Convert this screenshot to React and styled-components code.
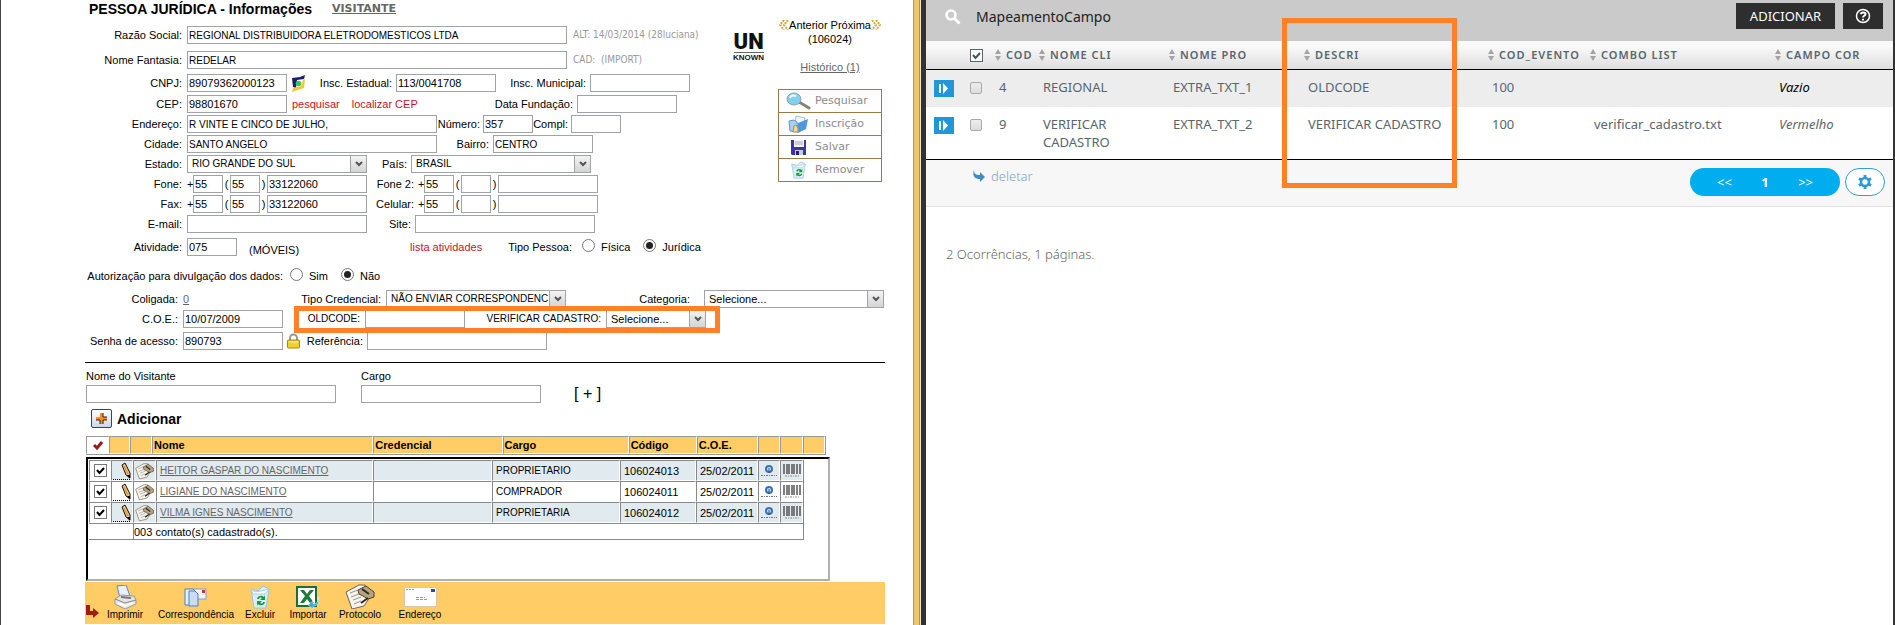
import React, { useId } from "react";
import styled, { createGlobalStyle } from "styled-components";

const GlobalStyle = createGlobalStyle`
  *, *::before, *::after { box-sizing: border-box; }
  body { margin: 0; background: #fff; }
  input, select, button { font: inherit; color: inherit; margin: 0; }
`;

const ui = `"Liberation Sans", Arial, sans-serif`;
const tahoma = `"DejaVu Sans Condensed", "DejaVu Sans", sans-serif`;
const verdana = `"DejaVu Sans", Verdana, sans-serif`;
const humanist = `"Noto Sans", "Open Sans", sans-serif`;

/* ---------- page ---------- */

const Page = styled.div`
  display: grid;
  grid-template-columns: minmax(921px, 921fr) minmax(0, 974fr);
  min-height: 100vh;
`;

const RecordPane = styled.section`
  display: flex;
  border-left: 1px solid #444;
  background: #fff;
  font: 11px/14px ${ui};
  color: #000;
`;

const RecordContent = styled.div`
  flex: 1;
  padding: 0 28px 0 84px;
`;

const PaneDivider = styled.div`
  width: 8px;
  flex: none;
  background: linear-gradient(
    90deg, #b2965c 0 1px, #efc670 1px 6px, #ad925c 6px 7px, #f1e6cb 7px 8px
  );
`;

const Overview = styled.div`
  display: flex;
  align-items: flex-start;
`;

const FormColumn = styled.div`
  flex: none;
  width: 648px;
`;

/* ---------- form parts ---------- */

const TitleBar = styled.header`
  display: flex;
  align-items: center;
  gap: 20px;
  height: 18px;
  padding-left: 4px;
`;

const Title = styled.h1`
  margin: 0;
  font: bold 14px/18px ${ui};
  white-space: nowrap;
`;

const VisitorLink = styled.a`
  font: bold 11px/18px ${verdana};
  color: #666;
`;

const Row = styled.div`
  display: flex;
  align-items: center;
  height: 18px;
  margin-top: ${(p) => p.$top ?? 2}px;
`;

const Label = styled.label`
  flex: none;
  width: ${(p) => p.$width}px;
  padding-right: ${(p) => p.$pad ?? 4}px;
  text-align: right;
  white-space: nowrap;
`;

const TextInput = styled.input`
  flex: none;
  width: ${(p) => p.$width}px;
  height: 18px;
  padding: 0 1px;
  border: 1px solid #a0a3a8;
  border-radius: 0;
  background: #fff;
  outline: none;
  && { font-size: ${(p) => (p.$compact ? 10 : 11)}px; }
`;

const SelectFrame = styled.span`
  display: grid;
  flex: none;
  width: ${(p) => p.$width}px;
  height: 18px;
`;

const SelectInput = styled.select`
  grid-area: 1 / 1;
  width: 100%;
  min-width: 0;
  padding: 0 17px 0 4px;
  appearance: none;
  border: 1px solid #a0a3a8;
  border-radius: 0;
  background: #fff;
  outline: none;
  && { font-size: ${(p) => (p.$compact ? 10 : 11)}px; }
`;

const SelectArrow = styled.span`
  grid-area: 1 / 1;
  justify-self: end;
  display: grid;
  place-items: center;
  width: 17px;
  border: 1px solid #a0a3a8;
  background: linear-gradient(#f3f3f3, #d4d4d4);
  pointer-events: none;
`;

const Mark = styled.span`
  flex: none;
  width: ${(p) => p.$width ?? 7}px;
  text-align: center;
`;

const SideNote = styled.span`
  padding-left: 6px;
  font: 10px/14px ${tahoma};
  color: #999;
  white-space: pre;
`;

const LinkSlot = styled.span`
  display: flex;
  flex: none;
  gap: 12px;
  width: ${(p) => p.$width}px;
  padding-left: ${(p) => p.$pad ?? 0}px;
  white-space: nowrap;
`;

const RedLink = styled.a`
  color: #c8141e;
  text-decoration: none;
`;

const GreyLink = styled.a`
  color: #666;
`;

const Activity = styled.span`
  flex: none;
  width: 173px;
  padding: 6px 0 0 12px;
`;

const IconSlot = styled.span`
  display: grid;
  place-items: center;
  flex: none;
  width: ${(p) => p.$width}px;
`;

const RadioLabel = styled.label`
  display: flex;
  align-items: center;
  gap: 6px;
  margin-right: 13px;
`;

const RadioInput = styled.input`
  && { margin-bottom: 4px; }
  display: grid;
  place-items: center;
  width: 13px;
  height: 13px;
  appearance: none;
  border: 1px solid #777;
  border-radius: 50%;
  background: #fff;

  &:checked::before {
    content: "";
    width: 7px;
    height: 7px;
    border-radius: 50%;
    background: #222;
  }
`;

const Highlighted = styled.div`
  position: relative;
  display: flex;
  align-items: center;
  margin-left: 11px;
  padding: 0 14px 0 13px;
  font-size: 10px;

  &::after {
    content: "";
    position: absolute;
    inset: -4px 0 -5px;
    border: 5px solid #ff8026;
    pointer-events: none;
  }
`;

const Rule = styled.hr`
  height: 1px;
  margin: 12px 0 6px;
  border: 0;
  background: #000;
`;

const VisitorRow = styled.div`
  display: flex;
  align-items: flex-end;
  gap: 25px;
  padding-left: 1px;
`;

const VisitorField = styled.label`
  display: grid;
  gap: 2px;
`;

const PlusButton = styled.button`
  && { margin-left: 8px; }
  padding: 0;
  border: 0;
  background: none;
  font: 16px/18px ${ui};
`;

const AddRow = styled.div`
  display: flex;
  align-items: center;
  gap: 5px;
  margin: 6px 0 8px;
  padding-left: 6px;
  font: bold 14px/16px ${ui};
`;

const AddButton = styled.button`
  display: grid;
  place-items: center;
  width: 21px;
  height: 19px;
  padding: 0;
  border: 1px solid #1d4a80;
  border-radius: 2px;
  background: linear-gradient(#fff, #cfd6e4);
`;

/* ---------- aside ---------- */

const Logo = styled.div`
  display: grid;
  flex: none;
  justify-items: center;
  width: 30px;
  margin-top: 32px;
  color: #111;
`;

const LogoTop = styled.span`
  width: 30px;
  border-bottom: 1px solid #666;
  font: 900 22px/20px Roboto, ${ui};
  text-align: center;
`;

const LogoBottom = styled.span`
  font: bold 8px/9px ${ui};
`;

const Aside = styled.aside`
  flex: none;
  width: 104px;
  margin: 18px 0 0 15px;
  text-align: center;
`;

const Neighbours = styled.nav`
  display: flex;
  align-items: center;
  justify-content: center;

  a { color: #000; text-decoration: none; }
  a + a { margin-left: 3px; }
`;

const History = styled.p`
  margin: 14px 0 15px;
`;

const Actions = styled.div`
  display: grid;
  border: 1px solid #9a7a45;
  border-top: 0;
`;

const ActionButton = styled.button`
  display: flex;
  align-items: center;
  gap: 4px;
  height: 23px;
  padding: 0 0 0 7px;
  border: 0;
  border-top: 1px solid #9a7a45;
  background: #fff;
  font: 11px/14px ${verdana};
  color: #8c8c8c;
`;

/* ---------- contacts ---------- */

const HeadTable = styled.table`
  width: 740px;
  margin-left: 1px;
  table-layout: fixed;
  border-spacing: 0;
  border-right: 1px solid #999;
  border-bottom: 1px solid #999;
`;

const HeadCell = styled.th`
  height: 18px;
  padding: 0 1px;
  border: 1px solid;
  border-color: #999 #fff #fff #999;
  background: ${(p) => (p.$plain ? "#fff" : "#fc6")};
  background-clip: padding-box;
  text-align: ${(p) => (p.$plain ? "center" : "left")};
  line-height: 14px;

  svg { display: block; margin: 0 auto; }
`;

const ListFrame = styled.div`
  width: 744px;
  min-height: 124px;
  margin: 2px 0 1px 1px;
  padding: 1px 0 0 1px;
  border: 2px solid;
  border-color: #000 #b0b0b0 #b0b0b0 #000;
`;

const ListTable = styled.table`
  width: 715px;
  table-layout: fixed;
  border-spacing: 0;
  border-right: 1px solid #888;
  border-bottom: 1px solid #888;
`;

const ListRow = styled.tr`
  background: ${(p) => (p.$shaded ? "#e1eaee" : "#fff")};
`;

const ListCell = styled.td`
  height: 21px;
  padding: 0 0 0 ${(p) => (p.$icon ? 0 : 3)}px;
  border: 1px solid;
  border-color: #888 #fff #fff #888;
  background: ${(p) => (p.$plain ? "#fff" : "transparent")};
  font-size: ${(p) => (p.$compact ? 10 : 11)}px;
  line-height: 14px;
  white-space: nowrap;

  svg { display: block; margin: 0 auto; }
`;

const FootCell = styled.td`
  height: 16px;
  padding: 0;
  border-top: 1px solid #888;
  border-left: ${(p) => (p.$blank ? 0 : "1px solid #888")};
  line-height: 14px;
`;

const Tick = styled.span`
  display: grid;
  width: 13px;
  height: 13px;
  margin: 0 auto;

  > * { grid-area: 1 / 1; }
  > svg { pointer-events: none; }
`;

const TickInput = styled.input`
  width: 13px;
  height: 13px;
  appearance: none;
  border: 1px solid ${(p) => p.$border ?? "#777"};
  background: #fff;
`;

const Toolbar = styled.div`
  display: flex;
  height: 42px;
  padding: 2px 0 0 1px;
  background: #fc6;
`;

const ToolArrow = styled.span`
  width: 16px;
  padding-top: 21px;
`;

const ToolButton = styled.button`
  display: grid;
  grid-template-rows: 25px 12px;
  justify-items: center;
  justify-content: center;
  align-items: center;
  width: ${(p) => p.$width}px;
  padding: 0;
  border: 0;
  background: none;
  font: 10px/12px ${ui};
`;

/* ---------- mapping pane ---------- */

const MapPane = styled.section`
  min-height: 100vh;
  border: solid #333;
  border-width: 0 2px 0 5px;
  background: #fff;
  font: 13px/18px ${humanist};
  color: #58666c;
`;

const TopBar = styled.header`
  display: flex;
  align-items: flex-start;
  height: 41px;
  padding: 3px 10px 0 19px;
  background: #cacaca;
`;

const PaneTitle = styled.h2`
  flex: 1;
  margin: 0;
  padding-left: 15px;
  font: 14px/28px ${humanist};
  color: #222;
`;

const DarkButton = styled.button`
  && { margin-left: 8px; }
  display: grid;
  place-items: center;
  width: ${(p) => p.$width}px;
  height: 26px;
  padding: 0;
  border: 0;
  background: #2e2e2e;
  font: 13px/20px ${humanist};
  color: #fff;
`;

const MapTable = styled.table`
  width: 100%;
  table-layout: fixed;
  border-spacing: 0;
  border-bottom: 1px solid #000;
`;

const MapHead = styled.th`
  position: relative;
  height: 29px;
  padding: 0;
  border-bottom: 1px solid #000;
  background: linear-gradient(#f9f9f9 20%, #dedede);
  text-align: left;
`;

const SortButton = styled.button`
  display: flex;
  align-items: center;
  gap: 5px;
  padding: 0 0 0 2px;
  border: 0;
  background: none;
  font: 600 11px/16px ${humanist};
  letter-spacing: 1px;
  white-space: nowrap;
`;

const ColumnFrame = styled.span`
  position: absolute;
  z-index: 1;
  top: -23px;
  left: -20px;
  width: 175px;
  height: 170px;
  border: 5px solid #ff8026;
  pointer-events: none;
`;

const MapRow = styled.tr`
  height: ${(p) => p.$height}px;
  background: ${(p) => (p.$shaded ? "#ededed" : "#fff")};
`;

const MapCell = styled.td`
  padding: ${(p) => (p.$icon ? "10px 0 0 8px" : "8px 24px 8px 6px")};
  vertical-align: top;
  font-style: ${(p) => (p.$italic ? "italic" : "normal")};
  color: ${(p) => (p.$dark ? "#000" : "inherit")};
`;

const WideCell = styled(MapCell)`
  padding-right: 0;
  white-space: nowrap;
`;

const OpenButton = styled.button`
  display: grid;
  place-items: center;
  width: 20px;
  height: 17px;
  padding: 0;
  border: 0;
  background: #2196d8;
`;

const SoftCheck = styled.input`
  && { margin: 2px; }
  display: block;
  width: 12px;
  height: 12px;
  appearance: none;
  border: 1px solid #aaa;
  border-radius: 2px;
  background: linear-gradient(#eee, #dcdcdc);
`;

const MapFooter = styled.footer`
  display: flex;
  align-items: flex-start;
  gap: 5px;
  height: 47px;
  padding: 8px 8px 0 47px;
  border-bottom: 1px solid #e4e4e4;
  background: #f7f7f7;
`;

const FooterTools = styled.div`
  flex: 1;
`;

const DeleteLink = styled.a`
  display: inline-flex;
  align-items: center;
  gap: 6px;
  color: #7aa5cd;
  font-weight: 300;
  line-height: 16px;
  text-decoration: none;
`;

const Pager = styled.nav`
  display: flex;
  align-items: center;
  justify-content: space-between;
  width: 150px;
  height: 28px;
  padding: 0 27px;
  border-radius: 14px;
  background: #00adee;
  color: #fff;

  a { color: #fff; font-size: 13px; text-decoration: none; }
`;

const GearButton = styled.button`
  display: grid;
  place-items: center;
  width: 40px;
  height: 28px;
  padding: 0;
  border: 1px solid #2fa3cf;
  border-radius: 14px;
  background: #fff;
`;

const Summary = styled.p`
  margin: 38px 0 0 20px;
  font: 300 13px/18px ${humanist};
  color: #666;
`;

/* ---------- icons ---------- */

const Chevrons = ({ flip }) => (
  <svg width="10" height="10" viewBox="0 0 10 10" fill="none" stroke="#dba32a" strokeWidth="2" strokeDasharray="2 1" aria-hidden="true">
    <path d={flip ? "M1 0l4 5-4 5M5 0l4 5-4 5" : "M5 0L1 5l4 5M9 0L5 5l4 5"} />
  </svg>
);

const ReceitaIcon = () => (
  <svg width="15" height="17" viewBox="0 0 15 17" aria-hidden="true">
    <path d="M1 3l8-1 5-2-1 4-7 1-1 8-3-1z" fill="#1a1f6e" />
    <path d="M1 17l1-4 8-2 2-6 2-1-1 9-6 2z" fill="#f3c73c" />
    <circle cx="7.500" cy="8.500" r="2.800" fill="#3fc45a" />
  </svg>
);

const LockIcon = () => (
  <svg width="13" height="16" viewBox="0 0 13 16" aria-hidden="true">
    <path d="M3 8V5a3.500 3.500 0 0 1 7 0v3" fill="none" stroke="#999" strokeWidth="2" />
    <rect x="0.500" y="7" width="12" height="8" rx="1" fill="#f2cf2c" stroke="#a88412" />
    <path d="M2 9h9" stroke="#fff3a0" />
  </svg>
);

const MagnifierIcon = () => (
  <svg width="25" height="19" viewBox="0 0 25 19" aria-hidden="true">
    <path d="M13 10l10 6" stroke="#8d8374" strokeWidth="3" strokeLinecap="round" />
    <ellipse cx="8" cy="7" rx="7" ry="6" fill="#7fd2ee" stroke="#8f9fae" />
    <path d="M4 6c1-3 4-3 6-2" fill="none" stroke="#fff" strokeWidth="2" />
  </svg>
);

const FolderIcon = () => (
  <svg width="25" height="19" viewBox="0 0 25 19" aria-hidden="true">
    <path d="M10 1l9 2-2 10-8-2z" fill="#eef6ff" stroke="#9fc0e2" />
    <path d="M12 8l10-4-2 10-8 4z" fill="#4f97dc" />
    <path d="M3 6l5-1 3 2 1 10-8-1z" fill="#a8d0f3" stroke="#5d97cf" />
    <path d="M7 17l1-6 2-1 2 3v4z" fill="#e9d9a4" stroke="#a99255" />
  </svg>
);

const FloppyIcon = () => (
  <svg width="25" height="17" viewBox="0 0 25 17" aria-hidden="true">
    <path d="M5 1h15v15H6l-1-1z" fill="#3d369c" />
    <rect x="8" y="1" width="10" height="7" fill="#f2f2fa" />
    <path d="M9 3h8M9 5h8" stroke="#aaa" />
    <rect x="9" y="11" width="8" height="5" fill="#c9cbe0" />
    <rect x="10" y="12" width="3" height="4" fill="#26226b" />
  </svg>
);

const BinIcon = ({ width = 25, height = 18 }) => (
  <svg width={width} height={height} viewBox="0 0 24 24" aria-hidden="true">
    <path d="M3 4l7 2 5-5 6 3-3 19H6z" fill="#d9eff8" stroke="#9dc6dd" />
    <path d="M3 4l4 3 6-1 8-2-4 5H5z" fill="#fff" stroke="#a7cfe2" />
    <path d="M9 14c1-4 5-4 7-2l1-2v5h-5l2-2c-2-1-3 0-3 1zM17 17c-1 4-5 4-7 2l-1 2v-5h5l-2 2c2 1 3 0 3-1z" fill="#159a3a" />
  </svg>
);

const PlusIcon = () => (
  <svg width="13" height="13" viewBox="0 0 13 13" aria-hidden="true">
    <path d="M5 1h3v4h4v3H8v4H5V8H1V5h4z" fill="#ff8c1a" />
    <path d="M8 1v4h4M5 12V8H1M8 12V8h4" fill="none" stroke="#222" />
  </svg>
);

const RedCheckIcon = () => (
  <svg width="10" height="9" viewBox="0 0 10 9" aria-hidden="true">
    <path d="M1 4l3 3 5-6" fill="none" stroke="#a01818" strokeWidth="3" />
  </svg>
);

const CheckMark = ({ color = "#000" }) => (
  <svg width="13" height="13" viewBox="0 0 13 13" aria-hidden="true">
    <path d="M3 6l2.500 3L10 4" fill="none" stroke={color} strokeWidth="2" />
  </svg>
);

const PencilIcon = () => (
  <svg width="20" height="18" viewBox="0 0 20 18" aria-hidden="true">
    <path d="M1 17.500h17" stroke="#000" strokeDasharray="1 1" />
    <path d="M10 3l3-2 5 10v5l-4-3z" fill="#f2c27e" stroke="#111" />
    <path d="M12 4l4 8" stroke="#c98a40" />
    <path d="M15 13l3 0v4z" fill="#000" />
  </svg>
);

const NoteIcon = ({ width = 19, height = 18 }) => (
  <svg width={width} height={height} viewBox="0 0 30 25" aria-hidden="true">
    <path d="M1 8L14 1l6 0 5 12-6 9-12 3z" fill="#f6f4ee" stroke="#6b6558" />
    <path d="M5 9l8-3M6 13l8-3M8 16l8-3M9 20l7-3" stroke="#9b978c" />
    <path d="M13 6l8-4 8 6v5l-6 2-5-3-4-2z" fill="#b5a382" stroke="#4a4132" />
    <path d="M17 5l7 5M23 14l-7 5" stroke="#2e281e" strokeWidth="2" />
  </svg>
);

const BadgeIcon = () => (
  <svg width="18" height="14" viewBox="0 0 18 14" aria-hidden="true">
    <circle cx="9" cy="5" r="3" fill="#d5e3f5" stroke="#3c70b4" strokeWidth="2" />
    <path d="M9 4v5" stroke="#2a4f8c" />
    <path d="M1 11.500h16" stroke="#68748a" strokeDasharray="2 1 1 1" />
  </svg>
);

const BarcodeIcon = () => (
  <svg width="18" height="14" viewBox="0 0 18 14" aria-hidden="true">
    <path d="M1 0v10M4 0v10M6 0v10M9 0v10M11 0v10M14 0v10M17 0v10" stroke="#555" strokeWidth="1.500" />
    <path d="M2 12h15" stroke="#888" strokeDasharray="2 1 1 1" />
  </svg>
);

const CornerArrow = () => (
  <svg width="13" height="13" viewBox="0 0 13 13" aria-hidden="true">
    <path d="M0 0h4v6h3V3l6 5-6 5v-3H0z" fill="#a51a12" />
  </svg>
);

const PrinterIcon = () => (
  <svg width="24" height="24" viewBox="0 0 24 24" aria-hidden="true">
    <path d="M4 1l9-1 4 11-10 2z" fill="#e6f0ff" stroke="#5b87cc" />
    <path d="M2 14l6-4 13 1 2 4v4l-11 5-10-5z" fill="#e4e4e4" stroke="#999" />
    <path d="M2 14l10 4 11-3" fill="none" stroke="#888" />
    <path d="M5 18l7 3 8-3" fill="none" stroke="#fff" strokeWidth="2" />
    <path d="M8 12l10 1" stroke="#777" strokeWidth="2" />
  </svg>
);

const LetterIcon = () => (
  <svg width="23" height="20" viewBox="0 0 23 20" aria-hidden="true">
    <rect x="9" y="2" width="13" height="10" fill="#f3f7ff" stroke="#7d9fda" />
    <rect x="18" y="3" width="3" height="3" fill="#c33" />
    <path d="M1 2h8l3 3v13H1z" fill="#e2edff" stroke="#4d7fd0" />
    <path d="M5 4h6l3 3v12H5z" fill="#c9ddfb" stroke="#4d7fd0" />
  </svg>
);

const SheetIcon = () => (
  <svg width="24" height="24" viewBox="0 0 24 24" aria-hidden="true">
    <rect x="1" y="2" width="19" height="19" fill="#fff" stroke="#1b6e36" strokeWidth="2" />
    <path d="M4 5l4 0 3 4 3-4h4l-5 6 5 7h-4l-3-4-3 4H4l5-7z" fill="#1d7a3c" />
    <path d="M22 12c1 4-1 7-5 7v-3l-5 4 5 4v-3c5 0 7-4 5-9z" fill="#3f9fe0" stroke="#fff" strokeWidth="0.500" />
  </svg>
);

const EnvelopeIcon = () => (
  <svg width="33" height="20" viewBox="0 0 33 20" aria-hidden="true">
    <rect x="0.500" y="0.500" width="32" height="19" fill="#fff" stroke="#d5c8a8" />
    <path d="M2 2.500h9" stroke="#999" strokeDasharray="2 1" />
    <rect x="27" y="2" width="4" height="3" fill="#3346a8" />
    <path d="M12 10.500h9M12 12.500h12" stroke="#999" strokeDasharray="3 1" />
  </svg>
);

const SearchIcon = () => (
  <svg width="16" height="28" viewBox="0 0 16 28" aria-hidden="true">
    <circle cx="6" cy="12" r="4.500" fill="none" stroke="#fff" strokeWidth="2.600" />
    <path d="M9.500 15.500l5 5" stroke="#fff" strokeWidth="3" />
  </svg>
);

const HelpIcon = () => (
  <svg width="16" height="16" viewBox="0 0 16 16" fill="none" stroke="#fff" aria-hidden="true">
    <circle cx="8" cy="8" r="6.500" strokeWidth="1.500" />
    <path d="M5.500 6c1-2 5-2 5 0S8 7.500 8 9.500M8 10.800v1.700" strokeWidth="2" />
  </svg>
);

const SortIcon = () => (
  <svg width="6" height="12" viewBox="0 0 6 12" aria-hidden="true">
    <path d="M3 0l3 5H0zM3 12l3-5H0z" fill="#a3a3a3" />
  </svg>
);

const OpenIcon = () => (
  <svg width="10" height="11" viewBox="0 0 10 11" fill="#fff" aria-hidden="true">
    <path d="M0 1h2v9H0zM4 0l5 5.500L4 11z" />
  </svg>
);

const ReplyArrow = () => (
  <svg width="12" height="12" viewBox="0 0 12 12" aria-hidden="true">
    <path d="M1 0c0 3 1 5 6 5V2l5 5-5 5V9C2 9-1 6 1 0z" fill="#3f8cc4" />
  </svg>
);

const GearIcon = () => (
  <svg width="14" height="14" viewBox="0 0 14 14" aria-hidden="true">
    <circle cx="7" cy="7" r="4" fill="none" stroke="#2b9ad6" strokeWidth="2.600" />
    <path d="M7 0v2.500M7 11.500V14M1 3.500l2 1.200M11 9.300l2 1.200M13 3.500l-2 1.200M3 9.300l-2 1.200" stroke="#2b9ad6" strokeWidth="2.800" />
  </svg>
);

/* ---------- composed parts ---------- */

function Field({ label, labelWidth, pad, width, value = "", compact }) {
  const id = useId();
  return (
    <>
      <Label htmlFor={id} $width={labelWidth} $pad={pad}>{label}</Label>
      <TextInput id={id} $width={width} $compact={compact} defaultValue={value} />
    </>
  );
}

function SelectField({ label, labelWidth, pad, width, value, compact }) {
  const id = useId();
  return (
    <>
      <Label htmlFor={id} $width={labelWidth} $pad={pad}>{label}</Label>
      <SelectFrame $width={width}>
        <SelectInput id={id} $compact={compact}><option>{value}</option></SelectInput>
        <SelectArrow>
          <svg width="8" height="6" viewBox="0 0 8 6" aria-hidden="true">
            <path d="M1 1l3 3 3-3" fill="none" stroke="#555" strokeWidth="2" />
          </svg>
        </SelectArrow>
      </SelectFrame>
    </>
  );
}

function PhoneField({ label, labelWidth, pad, area = "", number = "" }) {
  const id = useId();
  return (
    <>
      <Label htmlFor={id} $width={labelWidth} $pad={pad}>{label}</Label>
      <Mark $width={6}>+</Mark>
      <TextInput $width={30} defaultValue="55" aria-label={`${label} DDI`} />
      <Mark>(</Mark>
      <TextInput $width={30} defaultValue={area} aria-label={`${label} DDD`} />
      <Mark>)</Mark>
      <TextInput id={id} $width={100} defaultValue={number} />
    </>
  );
}

const Radio = ({ name, label, checked }) => (
  <RadioLabel>
    <RadioInput type="radio" name={name} defaultChecked={checked} />
    {label}
  </RadioLabel>
);

const Columns = ({ widths }) => (
  <colgroup>
    {widths.map((w, i) => <col key={i} style={w ? { width: w } : undefined} />)}
  </colgroup>
);

const contacts = [
  { name: "HEITOR GASPAR DO NASCIMENTO", role: "PROPRIETARIO", code: "106024013" },
  { name: "LIGIANE DO NASCIMENTO", role: "COMPRADOR", code: "106024011" },
  { name: "VILMA IGNES NASCIMENTO", role: "PROPRIETARIA", code: "106024012" },
];

const actions = [
  ["Pesquisar", MagnifierIcon],
  ["Inscrição", FolderIcon],
  ["Salvar", FloppyIcon],
  ["Remover", BinIcon],
];

const mapColumns = ["COD", "NOME CLI", "NOME PRO", "DESCRI", "COD_EVENTO", "COMBO LIST", "CAMPO COR"];

const mappings = [
  { cod: "4", cli: "REGIONAL", pro: "EXTRA_TXT_1", desc: "OLDCODE", combo: "", color: "Vazio" },
  { cod: "9", cli: "VERIFICAR CADASTRO", pro: "EXTRA_TXT_2", desc: "VERIFICAR CADASTRO", combo: "verificar_cadastro.txt", color: "Vermelho" },
];

function CompanyForm() {
  return (
    <Overview>
      <FormColumn>
        <TitleBar>
          <Title>PESSOA JURÍDICA - Informações</Title>
          <VisitorLink href="#visitante">VISITANTE</VisitorLink>
        </TitleBar>
        <Row $top={8}>
          <Field compact label="Razão Social:" labelWidth={102} pad={5} width={380} value="REGIONAL DISTRIBUIDORA ELETRODOMESTICOS LTDA" />
          <SideNote>ALT: 14/03/2014 (28luciana)</SideNote>
        </Row>
        <Row $top={7}>
          <Field compact label="Nome Fantasia:" labelWidth={102} pad={5} width={380} value="REDELAR" />
          <SideNote>{"CAD:  (IMPORT)"}</SideNote>
        </Row>
        <Row $top={5}>
          <Field label="CNPJ:" labelWidth={102} pad={5} width={100} value="89079362000123" />
          <IconSlot $width={22}><ReceitaIcon /></IconSlot>
          <Field label="Insc. Estadual:" labelWidth={87} width={100} value="113/0041708" />
          <Field label="Insc. Municipal:" labelWidth={94} width={100} />
        </Row>
        <Row $top={3}>
          <Field label="CEP:" labelWidth={102} pad={5} width={100} value="98801670" />
          <LinkSlot $width={128} $pad={5}>
            <RedLink href="#pesquisar">pesquisar</RedLink>
            <RedLink href="#cep">localizar CEP</RedLink>
          </LinkSlot>
          <Field label="Data Fundação:" labelWidth={162} width={100} />
        </Row>
        <Row>
          <Field compact label="Endereço:" labelWidth={102} pad={5} width={250} value="R VINTE E CINCO DE JULHO," />
          <Field label="Número:" labelWidth={46} pad={3} width={50} value="357" />
          <Field label="Compl:" labelWidth={38} pad={3} width={50} />
        </Row>
        <Row>
          <Field compact label="Cidade:" labelWidth={102} pad={5} width={250} value="SANTO ANGELO" />
          <Field compact label="Bairro:" labelWidth={56} width={100} value="CENTRO" />
        </Row>
        <Row>
          <SelectField compact label="Estado:" labelWidth={102} pad={5} width={180} value="RIO GRANDE DO SUL" />
          <SelectField compact label="País:" labelWidth={44} width={180} value="BRASIL" />
        </Row>
        <Row>
          <PhoneField label="Fone:" labelWidth={102} pad={5} area="55" number="33122060" />
          <PhoneField label="Fone 2:" labelWidth={51} />
        </Row>
        <Row>
          <PhoneField label="Fax:" labelWidth={102} pad={5} area="55" number="33122060" />
          <PhoneField label="Celular:" labelWidth={51} />
        </Row>
        <Row>
          <Field label="E-mail:" labelWidth={102} pad={5} width={180} />
          <Field label="Site:" labelWidth={48} width={180} />
        </Row>
        <Row $top={5}>
          <Field label="Atividade:" labelWidth={102} pad={5} width={50} value="075" />
          <Activity>(MÓVEIS)</Activity>
          <LinkSlot $width={88}><RedLink href="#atividades">lista atividades</RedLink></LinkSlot>
          <Label as="span" $width={84} $pad={10}>Tipo Pessoa:</Label>
          <Radio name="pessoa" label="Física" />
          <Radio name="pessoa" label="Jurídica" checked />
        </Row>
        <Row $top={11}>
          <Label as="span" $width={205} $pad={7}>Autorização para divulgação dos dados:</Label>
          <Radio name="divulgacao" label="Sim" />
          <Radio name="divulgacao" label="Não" checked />
        </Row>
      </FormColumn>
      <Logo>
        <LogoTop>UN</LogoTop>
        <LogoBottom>KNOWN</LogoBottom>
      </Logo>
      <Aside>
        <Neighbours>
          <Chevrons />
          <a href="#anterior">Anterior</a>
          <a href="#proxima">Próxima</a>
          <Chevrons flip />
        </Neighbours>
        <div>(106024)</div>
        <History><GreyLink href="#historico">Histórico (1)</GreyLink></History>
        <Actions>
          {actions.map(([text, Icon]) => (
            <ActionButton key={text} type="button"><Icon />{text}</ActionButton>
          ))}
        </Actions>
      </Aside>
    </Overview>
  );
}

function AccessForm() {
  return (
    <>
      <Row $top={5}>
        <Label as="span" $width={98} $pad={5}>Coligada:</Label>
        <LinkSlot $width={100}><GreyLink href="#coligada">0</GreyLink></LinkSlot>
        <SelectField compact label="Tipo Credencial:" labelWidth={103} pad={5} width={180} value="NÃO ENVIAR CORRESPONDENCIA" />
        <SelectField label="Categoria:" labelWidth={138} pad={14} width={180} value="Selecione..." />
      </Row>
      <Row>
        <Field label="C.O.E.:" labelWidth={98} pad={5} width={100} value="10/07/2009" />
        <Highlighted>
          <Field label="OLDCODE:" labelWidth={58} pad={5} width={100} />
          <SelectField label="VERIFICAR CADASTRO:" labelWidth={141} pad={5} width={100} value="Selecione..." />
        </Highlighted>
      </Row>
      <Row $top={4}>
        <Field label="Senha de acesso:" labelWidth={98} pad={5} width={100} value="890793" />
        <IconSlot $width={20}><LockIcon /></IconSlot>
        <Field label="Referência:" labelWidth={64} width={180} />
      </Row>
    </>
  );
}

function Contacts() {
  return (
    <>
      <HeadTable>
        <Columns widths={[23, 21, 22, 221, 129, 126, 68, 61, 22, 23, 22]} />
        <thead>
          <tr>
            <HeadCell $plain><RedCheckIcon /></HeadCell>
            {["", "", "Nome", "Credencial", "Cargo", "Código", "C.O.E.", "", "", ""].map((t, i) => (
              <HeadCell key={i}>{t}</HeadCell>
            ))}
          </tr>
        </thead>
      </HeadTable>
      <ListFrame>
        <ListTable>
          <Columns widths={[22, 22, 23, 217, 119, 128, 76, 62, 22, 23]} />
          <tbody>
            {contacts.map((c, i) => (
              <ListRow key={c.code} $shaded={i % 2 === 0}>
                <ListCell $icon $plain>
                  <Tick>
                    <TickInput type="checkbox" defaultChecked aria-label={c.name} />
                    <CheckMark />
                  </Tick>
                </ListCell>
                <ListCell $icon><PencilIcon /></ListCell>
                <ListCell $icon><NoteIcon /></ListCell>
                <ListCell $compact><GreyLink href={`#${c.code}`}>{c.name}</GreyLink></ListCell>
                <ListCell />
                <ListCell $compact>{c.role}</ListCell>
                <ListCell>{c.code}</ListCell>
                <ListCell>25/02/2011</ListCell>
                <ListCell $icon><BadgeIcon /></ListCell>
                <ListCell $icon><BarcodeIcon /></ListCell>
              </ListRow>
            ))}
            <tr>
              <FootCell $blank colSpan={2} />
              <FootCell colSpan={8}>003 contato(s) cadastrado(s).</FootCell>
            </tr>
          </tbody>
        </ListTable>
      </ListFrame>
    </>
  );
}

function MappingPane() {
  return (
    <MapPane>
      <TopBar>
        <SearchIcon />
        <PaneTitle>MapeamentoCampo</PaneTitle>
        <DarkButton type="button" $width={99}>ADICIONAR</DarkButton>
        <DarkButton type="button" $width={40} aria-label="Ajuda"><HelpIcon /></DarkButton>
      </TopBar>
      <MapTable>
        <Columns widths={[34, 33, 44, 130, 135, 184, 102, 185, null]} />
        <thead>
          <tr>
            <MapHead />
            <MapHead>
              <Tick>
                <TickInput type="checkbox" defaultChecked $border="#58666c" aria-label="Selecionar todos" />
                <CheckMark color="#46545a" />
              </Tick>
            </MapHead>
            {mapColumns.map((c) => (
              <MapHead key={c}>
                <SortButton type="button"><SortIcon />{c}</SortButton>
                {c === "DESCRI" && <ColumnFrame />}
              </MapHead>
            ))}
          </tr>
        </thead>
        <tbody>
          {mappings.map((m, i) => (
            <MapRow key={m.cod} $shaded={i === 0} $height={i === 0 ? 37 : 52}>
              <MapCell $icon><OpenButton type="button" aria-label="Abrir"><OpenIcon /></OpenButton></MapCell>
              <MapCell $icon><SoftCheck type="checkbox" aria-label={m.desc} /></MapCell>
              <MapCell>{m.cod}</MapCell>
              <MapCell>{m.cli}</MapCell>
              <WideCell>{m.pro}</WideCell>
              <WideCell>{m.desc}</WideCell>
              <MapCell>100</MapCell>
              <WideCell>{m.combo}</WideCell>
              <MapCell $italic $dark={i === 0}>{m.color}</MapCell>
            </MapRow>
          ))}
        </tbody>
      </MapTable>
      <MapFooter>
        <FooterTools>
          <DeleteLink href="#deletar"><ReplyArrow />deletar</DeleteLink>
        </FooterTools>
        <Pager>
          <a href="#anterior">&lt;&lt;</a>
          <strong>1</strong>
          <a href="#proxima">&gt;&gt;</a>
        </Pager>
        <GearButton type="button" aria-label="Configurar"><GearIcon /></GearButton>
      </MapFooter>
      <Summary>2 Ocorrências, 1 páginas.</Summary>
    </MapPane>
  );
}

export default function App() {
  return (
    <Page>
      <GlobalStyle />
      <RecordPane>
        <RecordContent>
          <CompanyForm />
          <AccessForm />
          <Rule />
          <VisitorRow>
            <VisitorField>Nome do Visitante<TextInput $width={250} /></VisitorField>
            <VisitorField>Cargo<TextInput $width={180} /></VisitorField>
            <PlusButton type="button">[ + ]</PlusButton>
          </VisitorRow>
          <AddRow>
            <AddButton type="button" aria-label="Adicionar contato"><PlusIcon /></AddButton>
            Adicionar
          </AddRow>
          <Contacts />
          <Toolbar>
            <ToolArrow><CornerArrow /></ToolArrow>
            <ToolButton type="button" $width={46}><PrinterIcon />Imprimir</ToolButton>
            <ToolButton type="button" $width={96}><LetterIcon />Correspondência</ToolButton>
            <ToolButton type="button" $width={32}><BinIcon width={24} height={24} />Excluir</ToolButton>
            <ToolButton type="button" $width={64}><SheetIcon />Importar</ToolButton>
            <ToolButton type="button" $width={40}><NoteIcon width={30} height={25} />Protocolo</ToolButton>
            <ToolButton type="button" $width={80}><EnvelopeIcon />Endereço</ToolButton>
          </Toolbar>
        </RecordContent>
        <PaneDivider />
      </RecordPane>
      <MappingPane />
    </Page>
  );
}
